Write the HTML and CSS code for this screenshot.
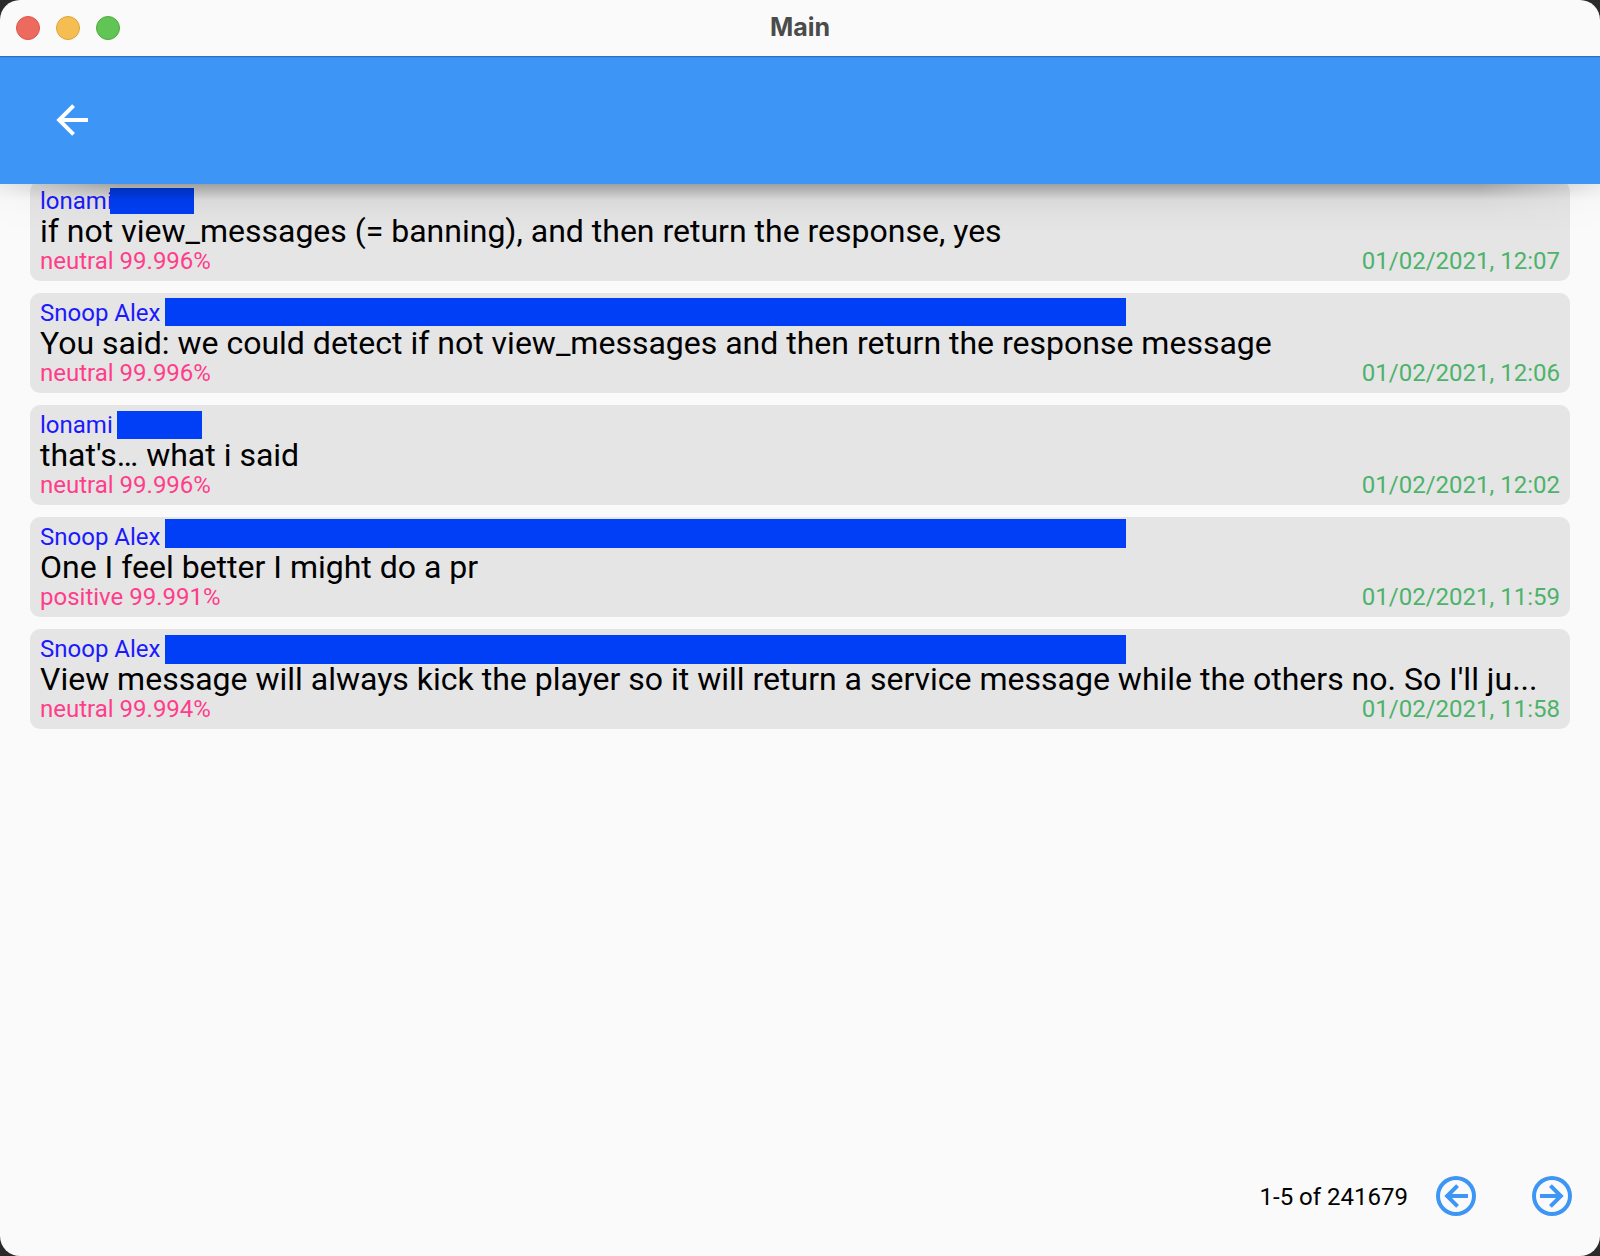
FILE: index.html
```html
<!DOCTYPE html>
<html lang="en">
<head>
<meta charset="utf-8">
<title>Main</title>
<link rel="stylesheet" href="styles.css">
</head>
<body>
<div class="window">
  <header class="titlebar">
    <div class="lights">
      <button class="light light-close" aria-label="Close"></button>
      <button class="light light-minimize" aria-label="Minimize"></button>
      <button class="light light-zoom" aria-label="Zoom"></button>
    </div>
    <h1 class="title">Main</h1>
  </header>
  <nav class="toolbar">
    <button class="icon-button" aria-label="Back">
      <svg class="icon" viewBox="0 0 24 24"><path d="M20,11V13H8L13.5,18.5L12.08,19.92L4.16,12L12.08,4.08L13.5,5.5L8,11H20Z"/></svg>
    </button>
  </nav>
  <main class="messages">
    <article class="message">
      <div class="author">lonami</div>
      <p class="text">if not view_messages (= banning), and then return the response, yes</p>
      <div class="meta"><span class="sentiment">neutral 99.996%</span><time class="date">01/02/2021, 12:07</time></div>
      <span class="redaction redaction-tight"></span>
    </article>
    <article class="message">
      <div class="author">Snoop Alex</div>
      <p class="text">You said: we could detect if not view_messages and then return the response message</p>
      <div class="meta"><span class="sentiment">neutral 99.996%</span><time class="date">01/02/2021, 12:06</time></div>
      <span class="redaction redaction-long"></span>
    </article>
    <article class="message">
      <div class="author">lonami</div>
      <p class="text">that's… what i said</p>
      <div class="meta"><span class="sentiment">neutral 99.996%</span><time class="date">01/02/2021, 12:02</time></div>
      <span class="redaction redaction-short"></span>
    </article>
    <article class="message">
      <div class="author">Snoop Alex</div>
      <p class="text">One I feel better I might do a pr</p>
      <div class="meta"><span class="sentiment">positive 99.991%</span><time class="date">01/02/2021, 11:59</time></div>
      <span class="redaction redaction-long redaction-high"></span>
    </article>
    <article class="message">
      <div class="author">Snoop Alex</div>
      <p class="text">View message will always kick the player so it will return a service message while the others no. So I'll ju...</p>
      <div class="meta"><span class="sentiment">neutral 99.994%</span><time class="date">01/02/2021, 11:58</time></div>
      <span class="redaction redaction-long redaction-low"></span>
    </article>
  </main>
  <footer class="pager">
    <span class="range">1-5 of 241679</span>
    <button class="icon-button" aria-label="Previous page">
      <svg class="icon" viewBox="0 0 24 24"><path d="M18,11V13H10L13.5,16.5L12.08,17.92L6.16,12L12.08,6.08L13.5,7.5L10,11H18M2,12A10,10 0 0,1 12,2A10,10 0 0,1 22,12A10,10 0 0,1 12,22A10,10 0 0,1 2,12M4,12A8,8 0 0,0 12,20A8,8 0 0,0 20,12A8,8 0 0,0 12,4A8,8 0 0,0 4,12Z"/></svg>
    </button>
    <button class="icon-button" aria-label="Next page">
      <svg class="icon" viewBox="0 0 24 24"><path d="M6,13V11H14L10.5,7.5L11.92,6.08L17.84,12L11.92,17.92L10.5,16.5L14,13H6M22,12A10,10 0 0,1 12,22A10,10 0 0,1 2,12A10,10 0 0,1 12,2A10,10 0 0,1 22,12M20,12A8,8 0 0,0 12,4A8,8 0 0,0 4,12A8,8 0 0,0 12,20A8,8 0 0,0 20,12Z"/></svg>
    </button>
  </footer>
</div>
</body>
</html>
```
FILE: styles.css
```css
* {
  box-sizing: border-box;
}

body {
  margin: 0;
  background: #2a2a2b;
  font-family: Roboto, "Liberation Sans", sans-serif;
  font-size: 24px;
  line-height: 30px;
  color: #000;
}

button {
  padding: 0;
  border: 0;
  background: none;
  color: inherit;
}

.window {
  display: flex;
  flex-direction: column;
  min-height: 100vh;
  border-radius: 20px;
  overflow: hidden;
  background: #fafafa;
}

/* Title bar */
.titlebar {
  display: grid;
  grid-template-columns: 1fr auto 1fr;
  align-items: center;
  height: 56px;
  padding: 0 16px;
}

.lights {
  display: flex;
  gap: 16px;
}

.light {
  width: 24px;
  height: 24px;
  border: 1px solid #d9564c;
  border-radius: 50%;
  background: #ed6a5f;
}

.light-minimize {
  border-color: #dba33f;
  background: #f6be50;
}

.light-zoom {
  border-color: #51a73f;
  background: #61c555;
}

.title {
  margin: 0;
  padding-bottom: 2px;
  font-family: Inter, "Liberation Sans", sans-serif;
  font-size: 25px;
  font-weight: 700;
  line-height: 32px;
  color: #4b4b4b;
}

/* Toolbar and the shadow it casts on the list */
.toolbar {
  position: relative;
  z-index: 1;
  display: flex;
  align-items: center;
  height: 128px;
  padding: 0 24px;
  background: #3d95f5;
  box-shadow: inset 0 1px #2f71bf, inset 0 2px #3a8ae6;
  color: #fff;
}

.toolbar::after {
  content: "";
  position: absolute;
  top: 100%;
  left: 0;
  right: 0;
  height: 48px;
  background: linear-gradient(rgba(0, 0, 0, .3), rgba(0, 0, 0, .18) 8px, rgba(0, 0, 0, .05) 16px, rgba(0, 0, 0, .02) 28px, transparent);
  mask-image: linear-gradient(90deg, rgba(0, 0, 0, .2), #000 120px, #000 calc(100% - 120px), rgba(0, 0, 0, .2));
  pointer-events: none;
}

.icon-button {
  display: flex;
  align-items: center;
  justify-content: center;
  width: 96px;
  height: 96px;
}

.icon {
  width: 48px;
  height: 48px;
  fill: currentColor;
}

/* Message list, scrolled slightly under the toolbar */
.messages {
  flex: 1;
  display: flex;
  flex-direction: column;
  gap: 12px;
  margin-top: -3px;
  padding: 0 30px;
}

.message {
  position: relative;
  padding: 6px 10px 5px;
  border-radius: 10px;
  background: #e5e5e5;
}

.author {
  line-height: 29px;
  height: 29px;
  color: #1a1aff;
}

.text {
  margin: 0;
  font-size: 32px;
  line-height: 30px;
  white-space: nowrap;
}

.meta {
  display: flex;
  justify-content: space-between;
}

.sentiment {
  color: #ff3d8b;
}

.date {
  color: #4db36a;
}

/* Blocks drawn over the rest of the author line */
.redaction {
  position: absolute;
  top: 6px;
  left: 87px;
  width: 85px;
  height: 28px;
  background: #003ff5;
}

.redaction-tight {
  top: 7px;
  left: 80px;
  width: 84px;
  height: 26px;
}

.redaction-long {
  top: 5px;
  left: 135px;
  width: 961px;
}

.redaction-high {
  top: 2px;
  height: 29px;
}

.redaction-low {
  top: 6px;
  height: 29px;
}

/* Pager */
.pager {
  display: flex;
  align-items: center;
  justify-content: flex-end;
  padding-bottom: 12px;
}

.range {
  padding-top: 2px;
}

.pager .icon-button {
  color: #3d95f5;
}
```
